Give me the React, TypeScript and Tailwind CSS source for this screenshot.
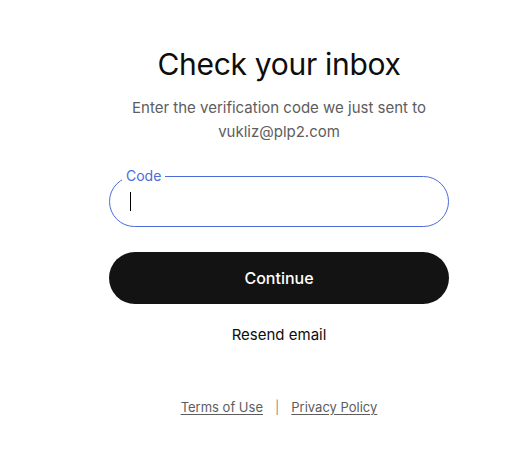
export default function App() {
  return (
    <div className="min-h-[470px] w-full bg-white" style={{ fontFamily: 'Inter, "Liberation Sans", sans-serif' }}>
      <div className="ml-[109px] flex w-[340px] flex-col items-center pt-[44px]">
        <h1 className="text-[30px] font-normal leading-[40px] tracking-[-0.01em] text-[#0d0d0d]">Check your inbox</h1>
        <p className="mt-[12px] text-center text-[15px] leading-[24px] text-[#5d5d5d]">
          Enter the verification code we just sent to
          <br />
          vukliz@plp2.com
        </p>

        <div className="relative mt-[32px] w-full">
          <span className="absolute left-[13px] top-[-9px] bg-white px-[4px] text-[14px] leading-[18px] text-[#4d6bdb]">Code</span>
          <div className="flex h-[51px] w-full items-center rounded-full border border-[#4d6bdb] px-[20px]">
            <span className="h-[19px] w-px bg-black" />
          </div>
        </div>

        <button className="mt-[25px] flex h-[52px] w-full items-center justify-center rounded-full bg-[#131313] text-[16px] font-medium text-white">
          Continue
        </button>

        <div className="mt-[21px] text-[15px] leading-[20px] text-[#0d0d0d]">Resend email</div>

        <div className="mt-[53px] flex items-center gap-[12px] text-[13px] leading-[18px] text-[#5d5d5d]">
          <span className="underline underline-offset-2">Terms of Use</span>
          <span className="text-[#8f8f8f]">|</span>
          <span className="underline underline-offset-2">Privacy Policy</span>
        </div>
      </div>
    </div>
  );
}
